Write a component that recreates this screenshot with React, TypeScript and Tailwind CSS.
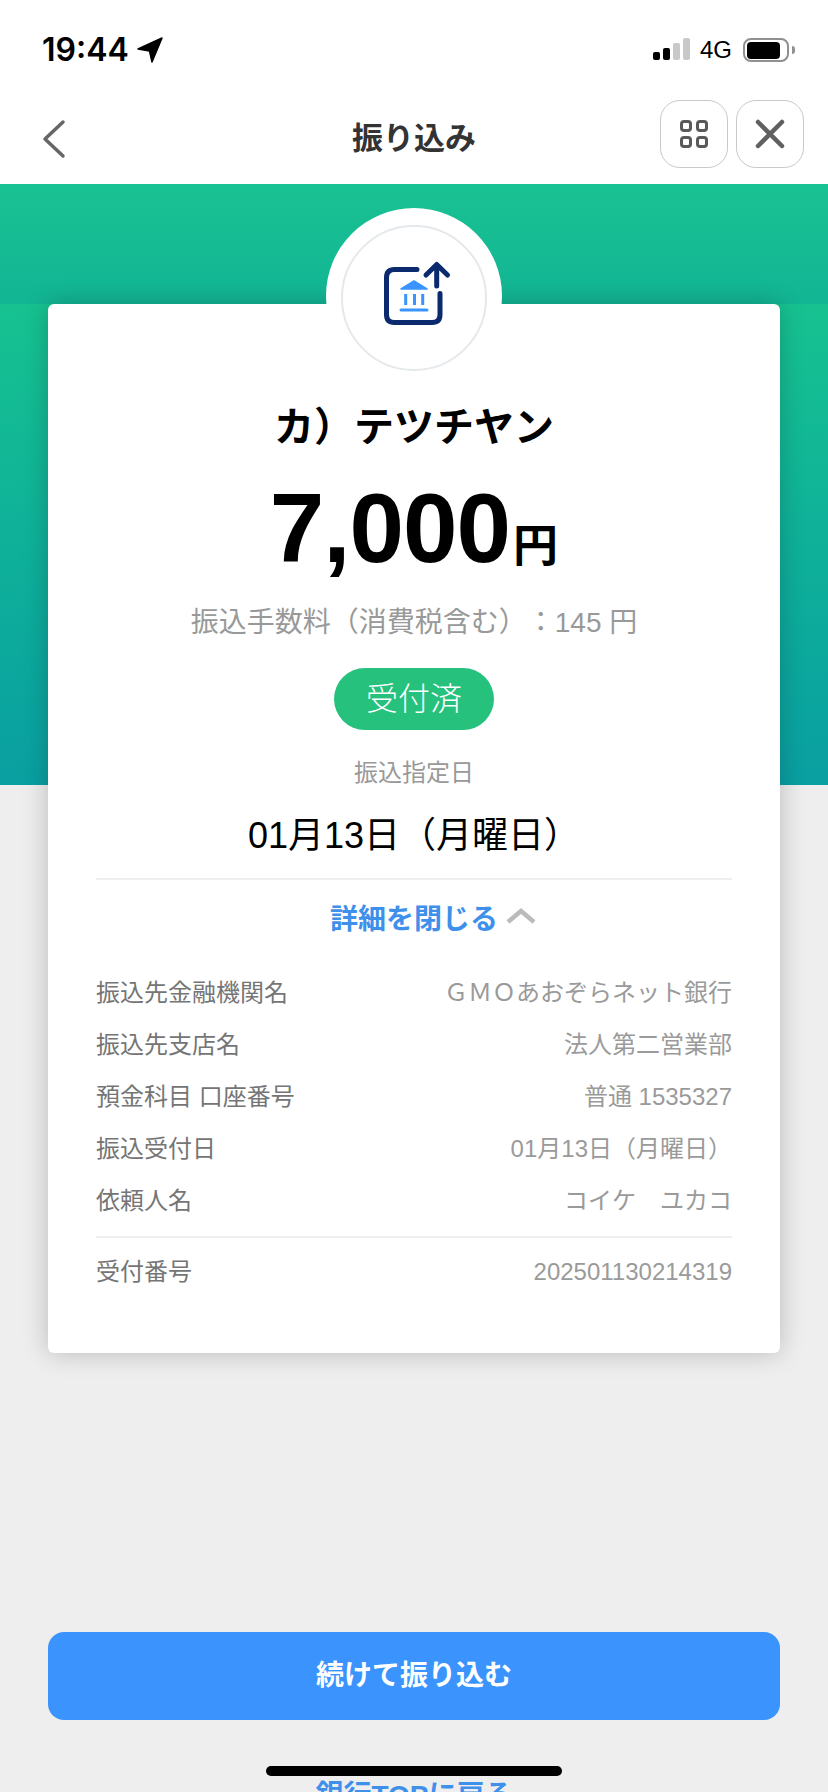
import React from "react"

const rows = [
  { label: "振込先金融機関名", value: "ＧＭＯあおぞらネット銀行" },
  { label: "振込先支店名", value: "法人第二営業部" },
  { label: "預金科目 口座番号", value: "普通 1535327" },
  { label: "振込受付日", value: "01月13日（月曜日）" },
  { label: "依頼人名", value: "コイケ　ユカコ" }
]

const DetailRow = ({ label, value }: { label: string; value: string }) => (
  <div className="flex h-[52px] items-center justify-between text-[24px] leading-[32px] whitespace-pre">
    <span className="text-[#757575]">{label}</span>
    <span className="text-[#9a9a9a]">{value}</span>
  </div>
)

const StatusBar = () => (
  <div className="flex h-[92px] items-start justify-between pl-[42px] pr-[33px] pt-[30px] text-black">
    <div className="flex items-center gap-[8px]">
      <span className="font-['Inter'] text-[32px] leading-[40px] font-semibold">19:44</span>
      <svg width="26" height="26" viewBox="0 0 26 26" className="mt-[-1px]">
        <path d="M25 1 L15 25 L12.5 14 L1 12 Z" fill="#000" stroke="#000" strokeWidth="1.5" strokeLinejoin="round" />
      </svg>
    </div>
    <div className="flex items-center pt-[6px]">
      <div className="mb-[2px] flex items-end gap-[3px]">
        <span className="h-[8px] w-[7px] rounded-[2px] bg-black" />
        <span className="h-[12px] w-[7px] rounded-[2px] bg-black" />
        <span className="h-[17px] w-[7px] rounded-[2px] bg-[#c8c8c8]" />
        <span className="h-[22px] w-[7px] rounded-[2px] bg-[#c8c8c8]" />
      </div>
      <span className="ml-[10px] text-[24px] leading-[28px] font-normal">4G</span>
      <div className="ml-[11px] flex items-center">
        <div className="h-[24px] w-[46px] rounded-[8px] border-2 border-[#909090] p-[1.5px]">
          <div className="h-full w-[33px] rounded-[4px] bg-black" />
        </div>
        <span className="ml-[3px] h-[8px] w-[3px] rounded-r-[3px] bg-[#909090]" />
      </div>
    </div>
  </div>
)

const NavBar = () => (
  <div className="grid h-[92px] grid-cols-[1fr_auto_1fr] items-center">
    <div className="pl-[41px]">
      <svg width="26" height="40" viewBox="0 0 26 40" className="mt-[2px]">
        <path d="M22 3 L4 20 L22 37" fill="none" stroke="#666" strokeWidth="3.5" strokeLinecap="round" strokeLinejoin="round" />
      </svg>
    </div>
    <div className="pt-[1px] text-[31px] leading-[40px] font-bold text-[#333]">振り込み</div>
    <div className="flex justify-end gap-[8px] pb-[9px] pr-[24px] pl-[8px]">
      <button className="flex h-[68px] w-[68px] items-center justify-center rounded-[20px] border border-[#c9c9c9] bg-white">
        <svg width="28" height="28" viewBox="0 0 28 28" fill="none" stroke="#5a5a5a" strokeWidth="3">
          <rect x="1.5" y="1.5" width="9" height="9" rx="2.5" />
          <rect x="17.5" y="1.5" width="9" height="9" rx="2.5" />
          <rect x="1.5" y="17.5" width="9" height="9" rx="2.5" />
          <rect x="17.5" y="17.5" width="9" height="9" rx="2.5" />
        </svg>
      </button>
      <button className="flex h-[68px] w-[68px] items-center justify-center rounded-[20px] border border-[#c9c9c9] bg-white">
        <svg width="30" height="30" viewBox="0 0 30 30" fill="none" stroke="#606060" strokeWidth="4.5" strokeLinecap="round">
          <path d="M3 3 L27 27 M27 3 L3 27" />
        </svg>
      </button>
    </div>
  </div>
)

// bank building inside a box with an upward arrow
const TransferIcon = () => (
  <svg width="72" height="72" viewBox="0 0 72 72" fill="none" strokeLinecap="round" strokeLinejoin="round" className="-translate-y-[3px] translate-x-[2px]">
    <path d="M37 10.5 H14.5 Q6.5 10.5 6.5 18.5 V55.5 Q6.5 63.5 14.5 63.5 H52 Q60 63.5 60 55.5 V34.5" stroke="#0b2a6e" strokeWidth="5" />
    <path d="M56.7 27 V6 M46 16 L56.7 5.5 L67.5 16" stroke="#0b2a6e" strokeWidth="5" />
    <path d="M21 30 L34 22 L47 30 Z" fill="#3b94fe" stroke="#3b94fe" strokeWidth="1.5" />
    <path d="M25.7 35 V46 M34.5 35 V46 M42.7 35 V46" stroke="#3b94fe" strokeWidth="3" strokeLinecap="butt" />
    <path d="M21 51 H47" stroke="#3b94fe" strokeWidth="3" />
  </svg>
)

export default function App() {
  return (
    <div
      className="relative flex h-[1792px] w-[828px] flex-col overflow-hidden bg-[#eeeeef] [text-spacing-trim:space-all]"
      style={{ fontFamily: '"Liberation Sans", "Noto Sans CJK JP", sans-serif' }}
    >
      <div className="shrink-0 bg-white">
        <StatusBar />
        <NavBar />
      </div>

      <div className="h-[120px] shrink-0 bg-gradient-to-b from-[#19c292] to-[#12b594]" />

      <div className="relative shrink-0">
        <div className="absolute inset-x-0 top-0 h-[481px] bg-gradient-to-b from-[#17c290] to-[#0a9fa1]" />

        <div className="relative mx-12 h-[1049px] rounded-[6px] bg-white px-12 pt-[99px] shadow-[0_0_26px_rgba(0,0,0,0.22)]">
          <div className="absolute left-1/2 top-[-96px] flex h-[176px] w-[176px] -translate-x-1/2 items-center justify-center rounded-full bg-white">
            <div className="mt-[3px] flex h-[146px] w-[146px] items-center justify-center rounded-full border-2 border-[#e5e9ec]">
              <TransferIcon />
            </div>
          </div>

          <div className="text-center text-[40px] leading-[48px] font-bold text-black">カ）テツチヤン</div>

          <div className="mt-[27px] flex h-[100px] items-baseline justify-center font-bold text-black">
            <span className="text-[98px] leading-[100px] tracking-[-1px]">7,000</span>
            <span className="ml-[3px] text-[45px] leading-[100px]">円</span>
          </div>

          <div className="mt-[27px] text-center text-[28px] leading-[36px] text-[#999]">振込手数料（消費税含む）：145 円</div>

          <div className="mt-[27px] flex justify-center">
            <span className="flex h-[62px] w-[160px] items-center justify-center rounded-full bg-[#26c17d] text-[32px] font-light text-white">受付済</span>
          </div>

          <div className="mt-[27px] text-center text-[24px] leading-[32px] text-[#999]">振込指定日</div>

          <div className="mt-[25px] text-center text-[36px] leading-[44px] text-black">01月13日（月曜日）</div>

          <div className="mt-[20px] h-[2px] bg-[#eeeeee]" />

          <div className="mt-[22px] flex h-[36px] items-center justify-center gap-[8px] pl-[38px]">
            <span className="text-[28px] leading-[36px] font-bold text-[#3f90ea]">詳細を閉じる</span>
            <svg width="30" height="16" viewBox="0 0 30 16" className="mb-[9px]">
              <path d="M2 14 L15 3 L28 14" fill="none" stroke="#bbb" strokeWidth="4.5" />
            </svg>
          </div>

          <div className="mt-[29px]">
            {rows.map(r => (
              <DetailRow key={r.label} label={r.label} value={r.value} />
            ))}
          </div>

          <div className="mt-[9px] h-[2px] bg-[#eeeeee]" />

          <div className="mt-[8px]">
            <DetailRow label="受付番号" value="202501130214319" />
          </div>
        </div>

        <button className="mx-12 mt-[279px] flex h-[88px] w-[732px] items-center justify-center rounded-[16px] bg-[#3b94fe] text-[28px] font-bold text-white">
          続けて振り込む
        </button>

        <div className="mt-[58px] text-center text-[28px] leading-[36px] font-bold text-[#3f90ea]">銀行TOPに戻る</div>
      </div>

      <div className="absolute left-[266px] top-[1766px] h-[10px] w-[296px] rounded-full bg-black" />
    </div>
  )
}
